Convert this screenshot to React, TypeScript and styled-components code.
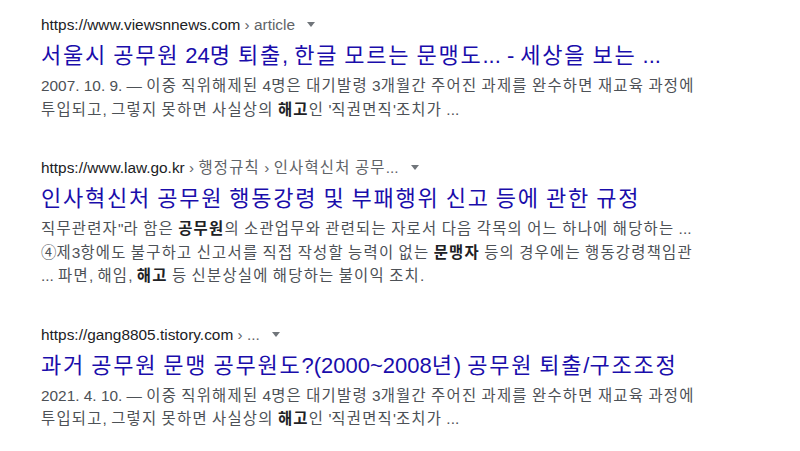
import React from "react";
import styled, { createGlobalStyle } from "styled-components";

const Global = createGlobalStyle`
  html, body { margin: 0; padding: 0; background: #fff; }
  body { font-family: "Liberation Sans", Arial, "Noto Sans CJK KR", sans-serif; }
`;

const Page = styled.div`
  width: 800px;
  height: 451px;
  overflow: hidden;
  box-sizing: border-box;
  padding: 15px 0 0 41px;
  display: flex;
  flex-direction: column;
  gap: 37px;
`;

const Result = styled.div`
  display: flex;
  flex-direction: column;
`;

const UrlLine = styled.div`
  font-size: 15.4px;
  line-height: 20px;
  height: 20px;
  color: #202124;
  white-space: nowrap;
`;

const Crumb = styled.span`
  color: #5f6368;
`;

const Caret = styled.span`
  display: inline-block;
  vertical-align: middle;
  width: 0;
  height: 0;
  margin-left: 12px;
  margin-bottom: 2px;
  border-left: 4.5px solid transparent;
  border-right: 4.5px solid transparent;
  border-top: 5px solid #70757a;
`;

const Title = styled.div`
  font-size: 22px;
  line-height: 28px;
  color: #1a0dab;
  margin-top: 7px;
  white-space: nowrap;
`;

const Snippet = styled.div`
  font-size: 15.4px;
  line-height: 23.5px;
  color: #4d5156;
  margin-top: 4px;
  white-space: nowrap;
`;

const Em = styled.b`
  color: #202124;
  font-weight: bold;
`;

const Hangul = styled.span`
  letter-spacing: 0.08em;
`;

function K({ children }: { children: string }) {
  const parts = children.split(/([\uAC00-\uD7A3\u3131-\u318E]+)/);
  return (
    <>
      {parts.map((p, i) =>
        i % 2 === 1 ? <Hangul key={i}>{p}</Hangul> : <React.Fragment key={i}>{p}</React.Fragment>
      )}
    </>
  );
}

type Seg = string | { b: string };
type R = { url: string; crumbs: string; title: string; lines: Seg[][] };

const results: R[] = [
  {
    url: "https://www.viewsnnews.com",
    crumbs: " › article",
    title: "서울시 공무원 24명 퇴출, 한글 모르는 문맹도... - 세상을 보는 ...",
    lines: [
      ["2007. 10. 9. — 이중 직위해제된 4명은 대기발령 3개월간 주어진 과제를 완수하면 재교육 과정에"],
      ["투입되고, 그렇지 못하면 사실상의 ", { b: "해고" }, "인 '직권면직'조치가 ..."],
    ],
  },
  {
    url: "https://www.law.go.kr",
    crumbs: " › 행정규칙 › 인사혁신처 공무...",
    title: "인사혁신처 공무원 행동강령 및 부패행위 신고 등에 관한 규정",
    lines: [
      ["직무관련자\"라 함은 ", { b: "공무원" }, "의 소관업무와 관련되는 자로서 다음 각목의 어느 하나에 해당하는 ..."],
      ["④제3항에도 불구하고 신고서를 직접 작성할 능력이 없는 ", { b: "문맹자" }, " 등의 경우에는 행동강령책임관"],
      ["... 파면, 해임, ", { b: "해고" }, " 등 신분상실에 해당하는 불이익 조치."],
    ],
  },
  {
    url: "https://gang8805.tistory.com",
    crumbs: " › ...",
    title: "과거 공무원 문맹 공무원도?(2000~2008년) 공무원 퇴출/구조조정",
    lines: [
      ["2021. 4. 10. — 이중 직위해제된 4명은 대기발령 3개월간 주어진 과제를 완수하면 재교육 과정에"],
      ["투입되고, 그렇지 못하면 사실상의 ", { b: "해고" }, "인 '직권면직'조치가 ..."],
    ],
  },
];

export default function App() {
  return (
    <>
      <Global />
      <Page>
        {results.map((r, i) => (
          <Result key={i}>
            <UrlLine>
              {r.url}
              <Crumb>
                <K>{r.crumbs}</K>
              </Crumb>
              <Caret />
            </UrlLine>
            <Title>
              <K>{r.title}</K>
            </Title>
            <Snippet>
              {r.lines.map((line, j) => (
                <div key={j}>
                  {line.map((s, k) =>
                    typeof s === "string" ? (
                      <K key={k}>{s}</K>
                    ) : (
                      <Em key={k}>
                        <K>{s.b}</K>
                      </Em>
                    )
                  )}
                </div>
              ))}
            </Snippet>
          </Result>
        ))}
      </Page>
    </>
  );
}
